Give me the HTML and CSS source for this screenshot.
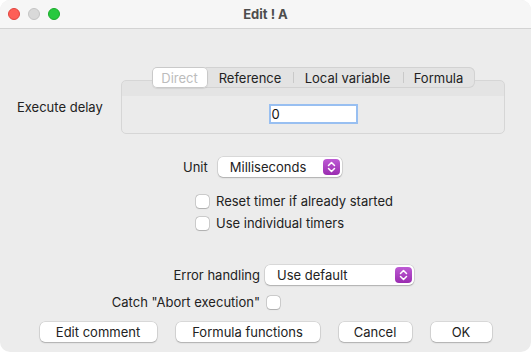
FILE: index.html
```html
<!DOCTYPE html>
<html lang="en">

<head>
    <meta charset="utf-8">
    <meta name="viewport" content="width=device-width, initial-scale=1.0">
    <title>Edit ! A</title>
    <link rel="stylesheet" href="styles.css">
</head>

<body>

    <div class="window">
        <header class="titlebar">
            <div class="lights">
                <span class="light red"></span>
                <span class="light gray"></span>
                <span class="light green"></span>
            </div>
            <div class="title">Edit ! A</div>
            <div></div>
        </header>

        <section class="delay-row">
            <div class="delay-label">Execute delay</div>
            <div class="tabpane">
                <nav class="tabs">
                    <span class="tab valgt" style="width: 56px">Direct</span>
                    <span class="tab" style="width: 85px">Reference</span>
                    <span class="tab divided" style="width: 110px">Local variable</span>
                    <span class="tab divided" style="width: 72px">Formula</span>
                </nav>
                <div class="tabbody">
                    <div class="textfield">0</div>
                </div>
            </div>
        </section>

        <section class="unit-row">
            <span>Unit</span>
            <div class="popup unit-popup">
                <span>Milliseconds</span>
                <span class="stepper">
                    <svg width="9" height="12" viewBox="0 0 9 12">
                        <path d="M1.5 4.5 L4.5 1.5 L7.5 4.5 M1.5 7.5 L4.5 10.5 L7.5 7.5" fill="none" stroke="white" stroke-width="1.5" stroke-linecap="round" stroke-linejoin="round"/>
                    </svg>
                </span>
            </div>
        </section>

        <section class="checks">
            <label class="check-row"><span class="checkbox"></span>Reset timer if already started</label>
            <label class="check-row"><span class="checkbox"></span>Use individual timers</label>
        </section>

        <section class="form-grid">
            <span class="form-label">Error handling</span>
            <div class="popup error-popup">
                <span>Use default</span>
                <span class="stepper">
                    <svg width="9" height="12" viewBox="0 0 9 12">
                        <path d="M1.5 4.5 L4.5 1.5 L7.5 4.5 M1.5 7.5 L4.5 10.5 L7.5 7.5" fill="none" stroke="white" stroke-width="1.5" stroke-linecap="round" stroke-linejoin="round"/>
                    </svg>
                </span>
            </div>
            <span class="form-label">Catch "Abort execution"</span>
            <div class="catch-cell"><span class="checkbox"></span></div>
        </section>

        <footer class="buttons">
            <button class="knap" style="width: 117px">Edit comment</button>
            <button class="knap" style="width: 144px">Formula functions</button>
            <button class="knap" style="width: 73px">Cancel</button>
            <button class="knap" style="width: 61px">OK</button>
        </footer>
    </div>

</body></html>
```

FILE: styles.css
```css
body {
    margin: 0;
    background-color: #ffffff;
    font-family: "Inter", "Noto Sans", sans-serif;
    font-size: 13px;
    color: #222222;
}

.window {
    width: 531px;
    height: 352px;
    background-color: #ececec;
    border-radius: 10px;
    overflow: hidden;
}

/* title bar */

.titlebar {
    display: grid;
    grid-template-columns: 1fr auto 1fr;
    align-items: center;
    height: 28px;
    background-color: #f6f6f6;
    border-bottom: 1px solid #d3d3d3;
}

.lights {
    display: flex;
    gap: 8px;
    padding-left: 8px;
}

.light {
    width: 12px;
    height: 12px;
    border-radius: 50%;
    box-sizing: border-box;
}

.red {
    background-color: #fe5f57;
    border: 0.5px solid #e0443e;
}

.gray {
    background-color: #d9d9d9;
    border: 0.5px solid #c4c4c4;
}

.green {
    background-color: #27c93f;
    border: 0.5px solid #1aab29;
}

.title {
    font-weight: 700;
    color: #4d4d4d;
}

/* execute delay */

.delay-row {
    display: flex;
    margin-top: 38px;
    padding-left: 17px;
}

.delay-label {
    width: 104px;
    padding-top: 32px;
    line-height: 16px;
}

.tabpane {
    width: 384px;
    display: flex;
    flex-direction: column;
    align-items: center;
}

.tabs {
    display: flex;
    height: 21px;
    position: relative;
    z-index: 1;
    margin-bottom: -8px;
    background-color: #e3e3e3;
    border-radius: 6px;
    box-shadow: inset 0 0 0 1px #d2d2d2;
}

.tab {
    display: flex;
    align-items: center;
    justify-content: center;
    position: relative;
}

.tab.divided::before {
    content: "";
    position: absolute;
    left: 0;
    top: 5px;
    height: 11px;
    border-left: 1px solid #c9c9c9;
}

.tab.valgt {
    background-color: #ffffff;
    color: #bcbcbc;
    border-radius: 5px;
    box-shadow: inset 0 0 0 1px #c9c9c9, 0 1px 1px rgba(0, 0, 0, 0.08);
}

.tabbody {
    align-self: stretch;
    box-sizing: border-box;
    height: 54px;
    padding-top: 23px;
    display: flex;
    justify-content: center;
    border: 1px solid #d6d6d6;
    border-radius: 5px;
    background: linear-gradient(#e4e4e4 0, #e4e4e4 15px, #ebebeb 15px);
}

.textfield {
    width: 89px;
    height: 20px;
    box-sizing: border-box;
    padding-left: 1px;
    line-height: 16px;
    background-color: #ffffff;
    border: 2px solid #98bff1;
    color: #111111;
}

/* popups */

.unit-row {
    display: flex;
    align-items: center;
    gap: 10px;
    margin-top: 23px;
    padding-left: 183px;
}

.popup {
    display: flex;
    align-items: center;
    justify-content: space-between;
    height: 20px;
    box-sizing: border-box;
    padding: 0 2px 0 12px;
    background-color: #ffffff;
    border-radius: 5px;
    box-shadow: 0 0 0 0.5px rgba(0, 0, 0, 0.16), 0 1px 1.5px rgba(0, 0, 0, 0.2);
}

.unit-popup {
    width: 124px;
}

.error-popup {
    width: 149px;
}

.stepper {
    display: flex;
    align-items: center;
    justify-content: center;
    width: 17px;
    height: 16px;
    border-radius: 4px;
    background: linear-gradient(#bd5ad4, #9a2cb0);
}

/* checkboxes */

.checks {
    margin-top: 13px;
    padding-left: 196px;
}

.check-row {
    display: flex;
    align-items: center;
    gap: 7px;
    height: 22px;
}

.checkbox {
    width: 13px;
    height: 13px;
    box-sizing: border-box;
    background-color: #ffffff;
    border-radius: 3.5px;
    box-shadow: 0 0 0 0.5px rgba(0, 0, 0, 0.25), 0 0.5px 1px rgba(0, 0, 0, 0.15);
}

/* error handling */

.form-grid {
    display: grid;
    grid-template-columns: 260px auto;
    grid-auto-rows: 20px;
    column-gap: 5px;
    row-gap: 7px;
    align-items: center;
    margin-top: 31px;
}

.form-label {
    justify-self: end;
}

.catch-cell {
    display: flex;
    padding-left: 2px;
}

/* buttons */

.buttons {
    display: flex;
    justify-content: center;
    gap: 19px;
    margin-top: 10px;
}

.knap {
    height: 20px;
    padding: 0;
    font-family: "Inter", "Noto Sans", sans-serif;
    font-size: 13px;
    color: #222222;
    background-color: #ffffff;
    border: none;
    border-radius: 5px;
    box-shadow: 0 0 0 0.5px rgba(0, 0, 0, 0.16), 0 1px 1.5px rgba(0, 0, 0, 0.2);
}
```
